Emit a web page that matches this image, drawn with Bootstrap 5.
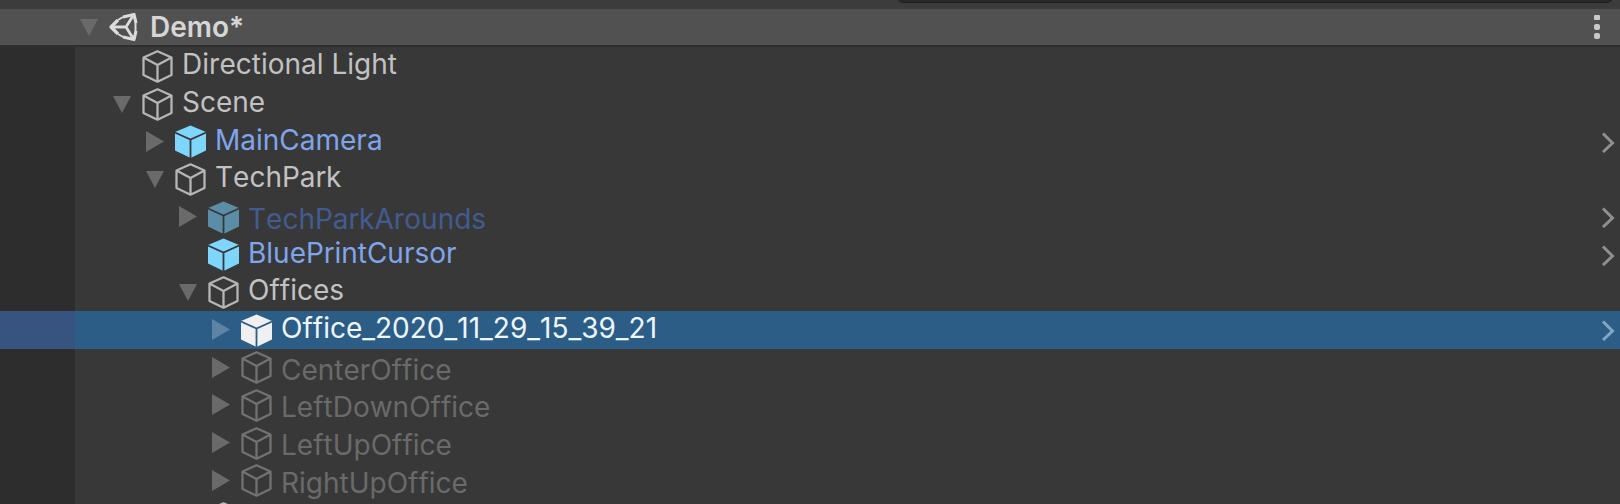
<!DOCTYPE html>
<html lang="en">
<head>
<meta charset="utf-8">
<meta name="viewport" content="width=device-width, initial-scale=1">
<title>Hierarchy</title>
<link href="https://cdn.jsdelivr.net/npm/bootstrap@5.3.0/dist/css/bootstrap.min.css" rel="stylesheet">
<script src="https://cdn.jsdelivr.net/npm/bootstrap@5.3.0/dist/js/bootstrap.bundle.min.js"></script>
<style>
  body { background: #383838; color: #c2c2c2; font-family: Inter, sans-serif; font-size: 28px; font-kerning: none; line-height: 36px; }
  .toolbar { height: 9px; background: #3c3c3c; padding-right: 6px; }
  .search-box { width: calc(45% - 8px); height: 30px; margin-bottom: 6px; background: #282828; border: 0; border-bottom: 1px solid #202020; border-radius: 8px; color: #c6c6c6; }
  .scene-bar { height: 38px; background: #515151; border-bottom: 2px solid #2f2f2f; padding-left: 80px; padding-right: 20px; }
  .scene-name { font-weight: 600; color: #d6d6d6; padding-bottom: 1px; }
  .tree { background: linear-gradient(to right, #2d2d2d 75px, #383838 75px); }
  .node { --depth: 0; height: 38px; padding-left: calc(113px + 33px * var(--depth)); padding-right: 5px; --gap: #383838; }
  .node:nth-child(3n) { height: 37px; }
  .depth-1 { --depth: 1; }
  .depth-2 { --depth: 2; }
  .depth-3 { --depth: 3; }
  .fold { width: 18px; height: 22px; color: #6a6a6a; }
  .cube { width: 31px; height: 33px; margin-left: 11px; color: #b6b6b6; }
  .label { padding-left: 9px; padding-bottom: 4px; white-space: nowrap; }
  .open-prefab { width: 14px; height: 22px; color: #8f8f8f; }
  .prefab .cube { color: #7fd6fd; }
  .prefab .label { color: #7fa5ea; }
  .inactive .label { color: #6a6a6a; padding-top: 4px; padding-bottom: 0; }
  .inactive .cube { color: #727272; }
  .inactive.prefab .cube { color: #5b8ea6; }
  .inactive.prefab .label { color: #425c91; }
  .chosen { background: linear-gradient(to right, #36547f 75px, #2c5d87 75px); --gap: #2c5d87; }
  .chosen .cube { color: #f0f0f2; }
  .chosen .label { color: #eef6fd; }
  .chosen .fold { color: #5f83a4; }
  .chosen .open-prefab { color: #83a6c6; }
  svg { display: block; }
</style>
</head>
<body class="vh-100 overflow-hidden d-flex flex-column">
<svg class="d-none" aria-hidden="true">
  <symbol id="i-down" viewBox="0 0 18 22"><path d="M0 3h18L9 20z" fill="currentColor"/></symbol>
  <symbol id="i-right" viewBox="0 0 18 22"><path d="M0 0v21l18-10.500z" fill="currentColor"/></symbol>
  <symbol id="i-cube" viewBox="0 0 31 33"><path d="M15.500 1.300 29.500 7.500V25L15.500 31.700 1.500 25V7.500zM1.500 7.500 15.500 15l14-7.500M15.500 15v16.700" fill="none" stroke="currentColor" stroke-width="2.300" stroke-linejoin="round"/></symbol>
  <symbol id="i-solid" viewBox="0 0 31 33"><path d="M15.500.500 31 7v18.500L15.500 33 0 25.500V7z" fill="currentColor"/><path d="M0 7.500 15.500 14.500 31 7.500M15.500 14.500V33" fill="none" stroke="var(--gap)" stroke-width="1.800"/></symbol>
  <symbol id="i-next" viewBox="0 0 14 22"><path d="M2 2.500 11.500 12 2 21" fill="none" stroke="currentColor" stroke-width="3"/></symbol>
</svg>

<header class="flex-shrink-0">
  <div class="toolbar d-flex justify-content-end align-items-end overflow-hidden">
    <input class="search-box flex-shrink-0" type="search" aria-label="Search hierarchy">
  </div>
  <div class="scene-bar d-flex align-items-center">
    <button class="fold btn p-0 border-0 rounded-0" aria-label="Collapse Demo"><svg width="18" height="22"><use href="#i-down"/></svg></button>
    <svg class="ms-2" width="36" height="30" viewBox="0 0 36 30" aria-hidden="true">
      <g transform="translate(3 1)" fill="none" stroke="#dcdcdc" stroke-linejoin="round">
        <path d="M2 14H17M17 14 24.500 2M17 14l7.500 12" stroke-width="2.800"/>
        <path d="M9 7 2 14l7 7M14 4 25 1.500 27 10M14 24l11 2.500L27 18" stroke-width="3.200"/>
        <path d="M9 7 14 4M9 21l5 3M26.500 10v8" stroke-width="2"/>
      </g>
    </svg>
    <span class="scene-name ps-2">Demo*</span>
    <button class="btn p-0 border-0 ms-auto" aria-label="Scene menu"><svg width="6" height="26" viewBox="0 0 6 26" fill="#c8c8c8"><rect y="1" width="6" height="5" rx="1"/><rect y="10" width="6" height="6" rx="2"/><rect y="19" width="6" height="6" rx="2"/></svg></button>
  </div>
</header>

<ul class="tree list-unstyled m-0 flex-grow-1 overflow-hidden">
  <li class="node d-flex align-items-center"><span class="fold"></span><svg class="cube"><use href="#i-cube"/></svg><span class="label">Directional Light</span></li>
  <li class="node d-flex align-items-center"><button class="fold btn p-0 border-0 rounded-0" aria-label="Collapse Scene"><svg width="18" height="22"><use href="#i-down"/></svg></button><svg class="cube"><use href="#i-cube"/></svg><span class="label">Scene</span></li>
  <li class="node depth-1 prefab d-flex align-items-center"><button class="fold btn p-0 border-0 rounded-0" aria-label="Expand MainCamera"><svg width="18" height="22"><use href="#i-right"/></svg></button><svg class="cube"><use href="#i-solid"/></svg><span class="label">MainCamera</span><button class="open-prefab btn p-0 border-0 ms-auto" aria-label="Open MainCamera"><svg width="14" height="22"><use href="#i-next"/></svg></button></li>
  <li class="node depth-1 d-flex align-items-center"><button class="fold btn p-0 border-0 rounded-0" aria-label="Collapse TechPark"><svg width="18" height="22"><use href="#i-down"/></svg></button><svg class="cube"><use href="#i-cube"/></svg><span class="label">TechPark</span></li>
  <li class="node depth-2 prefab inactive d-flex align-items-center"><button class="fold btn p-0 border-0 rounded-0" aria-label="Expand TechParkArounds"><svg width="18" height="22"><use href="#i-right"/></svg></button><svg class="cube"><use href="#i-solid"/></svg><span class="label">TechParkArounds</span><button class="open-prefab btn p-0 border-0 ms-auto" aria-label="Open TechParkArounds"><svg width="14" height="22"><use href="#i-next"/></svg></button></li>
  <li class="node depth-2 prefab d-flex align-items-center"><span class="fold"></span><svg class="cube"><use href="#i-solid"/></svg><span class="label">BluePrintCursor</span><button class="open-prefab btn p-0 border-0 ms-auto" aria-label="Open BluePrintCursor"><svg width="14" height="22"><use href="#i-next"/></svg></button></li>
  <li class="node depth-2 d-flex align-items-center"><button class="fold btn p-0 border-0 rounded-0" aria-label="Collapse Offices"><svg width="18" height="22"><use href="#i-down"/></svg></button><svg class="cube"><use href="#i-cube"/></svg><span class="label">Offices</span></li>
  <li class="node depth-3 chosen d-flex align-items-center"><button class="fold btn p-0 border-0 rounded-0" aria-label="Expand office"><svg width="18" height="22"><use href="#i-right"/></svg></button><svg class="cube"><use href="#i-solid"/></svg><span class="label">Office_2020_11_29_15_39_21</span><button class="open-prefab btn p-0 border-0 ms-auto" aria-label="Open office"><svg width="14" height="22"><use href="#i-next"/></svg></button></li>
  <li class="node depth-3 inactive d-flex align-items-center"><button class="fold btn p-0 border-0 rounded-0" aria-label="Expand CenterOffice"><svg width="18" height="22"><use href="#i-right"/></svg></button><svg class="cube"><use href="#i-cube"/></svg><span class="label">CenterOffice</span></li>
  <li class="node depth-3 inactive d-flex align-items-center"><button class="fold btn p-0 border-0 rounded-0" aria-label="Expand LeftDownOffice"><svg width="18" height="22"><use href="#i-right"/></svg></button><svg class="cube"><use href="#i-cube"/></svg><span class="label">LeftDownOffice</span></li>
  <li class="node depth-3 inactive d-flex align-items-center"><button class="fold btn p-0 border-0 rounded-0" aria-label="Expand LeftUpOffice"><svg width="18" height="22"><use href="#i-right"/></svg></button><svg class="cube"><use href="#i-cube"/></svg><span class="label">LeftUpOffice</span></li>
  <li class="node depth-3 inactive d-flex align-items-center"><button class="fold btn p-0 border-0 rounded-0" aria-label="Expand RightUpOffice"><svg width="18" height="22"><use href="#i-right"/></svg></button><svg class="cube"><use href="#i-cube"/></svg><span class="label">RightUpOffice</span></li>
  <li class="node depth-2 d-flex align-items-center"><span class="fold"></span><svg class="cube"><use href="#i-cube"/></svg></li>
</ul>
</body>
</html>
